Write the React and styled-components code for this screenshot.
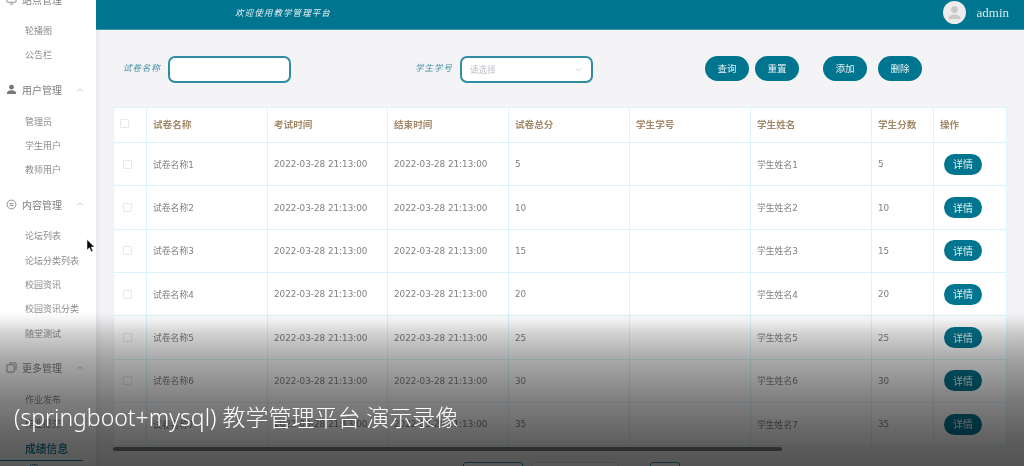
import React from 'react'
import styled, { createGlobalStyle } from 'styled-components'

const FONT = '"Noto Sans", "Noto Sans CJK SC", sans-serif'
const TEAL = '#00758f'

const GlobalStyle = createGlobalStyle`
  html, body {
    margin: 0;
    padding: 0;
    background: #fff;
    overflow: hidden;
  }
  * {
    box-sizing: border-box;
  }
`

const Page = styled.div`
  position: relative;
  display: flex;
  width: 1024px;
  height: 466px;
  overflow: hidden;
  font-family: ${FONT};
  filter: blur(0.5px);
`

const Sidebar = styled.aside`
  flex: 0 0 96px;
  height: 466px;
  overflow: hidden;
  background: #fff;
`

// the menu is scrolled up a little in the screenshot
const Menu = styled.div`
  margin-top: -13px;
`

const Group = styled.div`
  margin-bottom: 10px;

  &:last-child {
    margin-bottom: 0;
  }
`

const GroupTitle = styled.div`
  display: flex;
  align-items: center;
  height: 24px;
  padding-left: 6px;
  margin-bottom: 8px;
  font-size: 10px;
  color: #7d7d7d;

  svg {
    flex: none;
  }
  span {
    margin-left: 5px;
    width: 54px;
  }
`

const MenuItem = styled.div`
  width: 83px;
  height: 24.3px;
  line-height: 24.3px;
  padding-left: 25px;
  white-space: nowrap;
  color: ${p => (p.$active ? TEAL : '#8b8b8b')};
  font-weight: ${p => (p.$active ? 500 : 400)};
  font-size: ${p => (p.$active ? '10.8px' : '9px')};
  border-bottom: ${p => (p.$active ? `1px solid ${TEAL}` : 'none')};
`

const LoadingRing = styled.div`
  width: 14px;
  height: 14px;
  margin: 3px 0 0 27px;
  border: 1.5px solid #3d9bd6;
  border-radius: 50%;
`

const Main = styled.main`
  flex: 1;
  min-width: 0;
  display: flex;
  flex-direction: column;
  background: #f4f4f6;
  box-shadow: inset 5px 0 5px -3px #e6e6ea;
`

const TopBar = styled.header`
  flex: 0 0 30px;
  display: flex;
  align-items: center;
  padding: 0 15px 4px 139px;
  background: ${TEAL};
  border-bottom: 1px solid #3f97ab;
`

const Welcome = styled.div`
  flex: 1;
  font-size: 8.6px;
  letter-spacing: 1px;
  font-style: italic;
  color: #e4f0f3;
`

const Avatar = styled.div`
  display: flex;
  align-items: center;
  justify-content: center;
  width: 23px;
  height: 23px;
  margin-right: 11px;
  border-radius: 50%;
  background: #ececec;
  overflow: hidden;
`

const UserName = styled.div`
  font-family: "Liberation Serif", serif;
  font-size: 13px;
  color: #d9e9ed;
`

const Content = styled.div`
  flex: 1;
  min-height: 0;
  padding: 26px 18px 0 17px;
`

const FilterBar = styled.div`
  display: flex;
  align-items: flex-start;
  height: 51px;
`

const FieldLabel = styled.label`
  width: 38px;
  margin: 3px 7px 0 10px;
  padding-top: 2px;
  font-size: 8.6px;
  line-height: 14px;
  white-space: nowrap;
  font-style: italic;
  letter-spacing: 0.8px;
  color: #3f8ea3;
`

const TextBox = styled.div`
  display: flex;
  align-items: center;
  justify-content: space-between;
  width: ${p => p.$width}px;
  height: 27px;
  padding: 0 8px;
  margin-right: ${p => p.$gap || 0}px;
  border: 2px solid #2f8ca3;
  border-radius: 7px;
  background: #fff;
`

const Placeholder = styled.span`
  font-size: 8.6px;
  color: #bdbdc4;
`

const PillButton = styled.button`
  width: ${p => (p.$small ? 38 : 44)}px;
  height: ${p => (p.$small ? 21 : 25)}px;
  margin-left: ${p => p.$gap || 0}px;
  padding: 0;
  border: none;
  border-radius: 13px;
  background: ${TEAL};
  color: #e8f3f5;
  font-family: ${FONT};
  font-size: ${p => (p.$small ? 10 : 9.6)}px;
  line-height: 1;
`

const Table = styled.table`
  width: 893px;
  table-layout: fixed;
  border-collapse: collapse;
  background: #fff;
`

const HeadCell = styled.th`
  height: 35px;
  padding: 0 0 3px 6px;
  text-align: left;
  font-size: 9.6px;
  font-weight: 700;
  color: #a3896a;
  border: 1px solid #dcf3fb;
  white-space: nowrap;
`

const Cell = styled.td`
  height: 43.35px;
  padding: 0 0 0 6px;
  font-family: "DejaVu Sans", "Noto Sans CJK SC", sans-serif;
  font-size: 8.8px;
  color: #808080;
  border: 1px solid #dcf3fb;
  white-space: nowrap;
`

const Check = styled.span`
  display: block;
  width: 9px;
  height: 9px;
  margin-left: ${p => (p.$head ? 0 : 3)}px;
  border: 1px solid #e8e8e8;
  border-radius: 1px;
  background: #fff;
`

const ScrollBar = styled.div`
  width: 669px;
  height: 4px;
  margin-top: 1px;
  border-radius: 2px;
  background: #7c7c7c;
`

const Pagination = styled.div`
  display: flex;
  margin: 11px 0 0 350px;
`

const PageBox = styled.div`
  width: ${p => p.$width}px;
  height: 20px;
  margin-right: ${p => p.$gap || 0}px;
  border: 1px solid ${p => (p.$plain ? '#dcdcdc' : '#2f8ca3')};
  border-radius: 3px;
  background: #fff;
`

const Shade = styled.div`
  position: absolute;
  left: 0;
  right: 0;
  bottom: 0;
  height: 154px;
  background: linear-gradient(
    to bottom,
    rgba(0, 0, 0, 0),
    rgba(0, 0, 0, 0.05) 5%,
    rgba(0, 0, 0, 0.18) 14%,
    rgba(0, 0, 0, 0.34) 31%,
    rgba(0, 0, 0, 0.5) 57%,
    rgba(0, 0, 0, 0.62) 83%,
    rgba(0, 0, 0, 0.66)
  );
  pointer-events: none;
`

const Caption = styled.div`
  position: absolute;
  left: 14px;
  top: 401px;
  font-family: "Noto Sans", "Noto Sans CJK SC", sans-serif;
  font-size: 23px;
  font-weight: 300;
  line-height: 32px;
  white-space: nowrap;
  color: #fff;
`

const Pointer = styled.svg`
  position: absolute;
  left: 86px;
  top: 239px;
`

const UserIcon = () => (
  <svg width="11" height="11" viewBox="0 0 12 12" fill="#777">
    <circle cx="6" cy="3.5" r="2.6" />
    <path d="M1 10c0-2.2 2.2-3.3 5-3.3s5 1.1 5 3.3v1H1z" />
  </svg>
)

const ChatIcon = () => (
  <svg width="11" height="11" viewBox="0 0 12 12" fill="none" stroke="#777" strokeWidth="0.9">
    <circle cx="6" cy="6" r="4.8" />
    <path d="M3.8 5h4.4M3.8 7h4.4" />
  </svg>
)

const CopyIcon = () => (
  <svg width="11" height="11" viewBox="0 0 12 12" fill="none" stroke="#777" strokeWidth="0.9">
    <rect x="1" y="3" width="8" height="8" rx="1" />
    <path d="M3.5 1h6.5a1 1 0 0 1 1 1v6.5" />
  </svg>
)

const ShopIcon = () => (
  <svg width="11" height="11" viewBox="0 0 12 12" fill="none" stroke="#777" strokeWidth="0.9">
    <rect x="1" y="2" width="10" height="7" rx="1" />
    <path d="M4 11h4" />
  </svg>
)

const ChevronUp = () => (
  <svg width="8" height="8" viewBox="0 0 8 8" fill="none" stroke="#b5b5b5" strokeWidth="0.8">
    <path d="M1.5 5.2L4 2.8l2.5 2.4" />
  </svg>
)

const ChevronDown = () => (
  <svg width="9" height="9" viewBox="0 0 9 9" fill="none" stroke="#c4c4ca" strokeWidth="0.8">
    <path d="M1.5 3l3 3 3-3" />
  </svg>
)

const menu = [
  { icon: <ShopIcon />, title: '站点管理', items: ['轮播图', '公告栏'] },
  { icon: <UserIcon />, title: '用户管理', items: ['管理员', '学生用户', '教师用户'] },
  { icon: <ChatIcon />, title: '内容管理', items: ['论坛列表', '论坛分类列表', '校园资讯', '校园资讯分类', '随堂测试'] },
  { icon: <CopyIcon />, title: '更多管理', items: ['作业发布', '作业提交', '成绩信息'] }
]

const columns = [
  { width: 33 },
  { width: 121, title: '试卷名称' },
  { width: 120, title: '考试时间' },
  { width: 121, title: '结束时间' },
  { width: 121, title: '试卷总分' },
  { width: 121, title: '学生学号' },
  { width: 121, title: '学生姓名' },
  { width: 62, title: '学生分数' },
  { width: 73, title: '操作' }
]

const rows = [1, 2, 3, 4, 5, 6, 7]

const App = () => {
  return (
    <Page>
      <GlobalStyle />
      <Sidebar>
        <Menu>
          {menu.map((group, i) => (
            <Group key={group.title}>
              <GroupTitle>
                {group.icon}
                <span>{group.title}</span>
                <ChevronUp />
              </GroupTitle>
              {group.items.map(item => (
                <MenuItem key={item} $active={item === '成绩信息'}>{item}</MenuItem>
              ))}
            </Group>
          ))}
        </Menu>
        <LoadingRing />
      </Sidebar>
      <Main>
        <TopBar>
          <Welcome>欢迎使用教学管理平台</Welcome>
          <Avatar>
            <svg width="15" height="15" viewBox="0 0 16 16" fill="#c9c9c9">
              <circle cx="8" cy="5" r="3.6" />
              <path d="M1.5 15c0-3.4 3-5 6.5-5s6.5 1.6 6.5 5z" />
            </svg>
          </Avatar>
          <UserName>admin</UserName>
        </TopBar>
        <Content>
          <FilterBar>
            <FieldLabel>试卷名称</FieldLabel>
            <TextBox $width={123} $gap={114} />
            <FieldLabel>学生学号</FieldLabel>
            <TextBox $width={133}>
              <Placeholder>请选择</Placeholder>
              <ChevronDown />
            </TextBox>
            <PillButton $gap={112}>查询</PillButton>
            <PillButton $gap={6}>重置</PillButton>
            <PillButton $gap={24}>添加</PillButton>
            <PillButton $gap={11}>删除</PillButton>
          </FilterBar>
          <Table>
            <colgroup>
              {columns.map((col, i) => <col key={i} width={col.width} />)}
            </colgroup>
            <thead>
              <tr>
                {columns.map((col, i) => (
                  <HeadCell key={i}>{col.title || <Check $head />}</HeadCell>
                ))}
              </tr>
            </thead>
            <tbody>
              {rows.map(n => (
                <tr key={n}>
                  <Cell><Check /></Cell>
                  <Cell>试卷名称{n}</Cell>
                  <Cell>2022-03-28 21:13:00</Cell>
                  <Cell>2022-03-28 21:13:00</Cell>
                  <Cell>{n * 5}</Cell>
                  <Cell />
                  <Cell>学生姓名{n}</Cell>
                  <Cell>{n * 5}</Cell>
                  <Cell><PillButton $small $gap={4}>详情</PillButton></Cell>
                </tr>
              ))}
            </tbody>
          </Table>
          <ScrollBar />
          <Pagination>
            <PageBox $width={60} $gap={9} />
            <PageBox $width={86} $gap={32} $plain />
            <PageBox $width={30} />
          </Pagination>
        </Content>
      </Main>
      <Pointer width="9" height="14" viewBox="0 0 9 14">
        <path d="M1 0.5v10.5l2.5-2.3 1.7 4 1.7-.7-1.7-3.9h3.3z" fill="#000" stroke="#fff" strokeWidth="0.5" />
      </Pointer>
      <Shade />
      <Caption>(springboot+mysql) 教学管理平台 演示录像</Caption>
    </Page>
  )
}

export default App
